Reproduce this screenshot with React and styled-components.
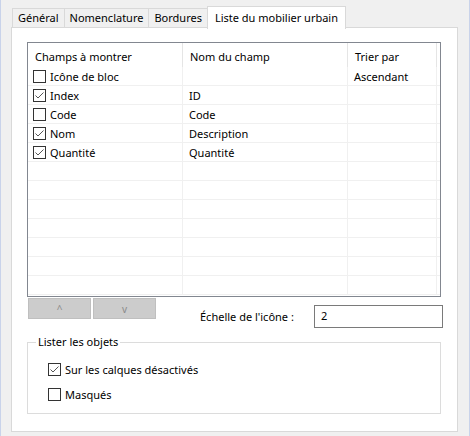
import React from "react";
import styled, { createGlobalStyle } from "styled-components";

const GlobalStyle = createGlobalStyle`
  html, body {
    margin: 0;
    padding: 0;
    background: #f0f0f0;
  }
  * { box-sizing: border-box; }
`;

const tabs = ["Général", "Nomenclature", "Bordures", "Liste du mobilier urbain"];

const rows = [
  { label: "Icône de bloc", checked: false, field: "", sort: "Ascendant" },
  { label: "Index", checked: true, field: "ID", sort: "" },
  { label: "Code", checked: false, field: "Code", sort: "" },
  { label: "Nom", checked: true, field: "Description", sort: "" },
  { label: "Quantité", checked: true, field: "Quantité", sort: "" },
];

const EMPTY_ROWS = 7;

const CheckBox = ({ checked, children }) => (
  <CheckLabel>
    <Box>
      {checked && (
        <svg width="11" height="11" viewBox="0 0 11 11">
          <polyline points="1.5,5.5 4,8 9.5,2.5" fill="none" stroke="#555" strokeWidth="1" />
        </svg>
      )}
    </Box>
    {children}
  </CheckLabel>
);

const App = () => {
  return (
    <Window>
      <GlobalStyle />
      <TabBar>
        {tabs.map((t, i) => (
          <Tab key={t} active={i === tabs.length - 1}>
            {t}
          </Tab>
        ))}
      </TabBar>
      <Panel>
        <ListBox>
          <HeaderRow>
            <HeadCell>Champs à montrer</HeadCell>
            <HeadCell>Nom du champ</HeadCell>
            <HeadCell>Trier par</HeadCell>
            <HeadCell />
          </HeaderRow>
          {rows.map((r) => (
            <Row key={r.label}>
              <Cell>
                <CheckBox checked={r.checked}>{r.label}</CheckBox>
              </Cell>
              <Cell>{r.field}</Cell>
              <Cell>{r.sort}</Cell>
              <Cell />
            </Row>
          ))}
          {Array.from({ length: EMPTY_ROWS }).map((_, i) => (
            <Row key={"e" + i}>
              <Cell />
              <Cell />
              <Cell />
              <Cell />
            </Row>
          ))}
        </ListBox>

        <ControlsRow>
          <MoveButton>^</MoveButton>
          <MoveButton>v</MoveButton>
          <ScaleLabel>Échelle de l'icône :</ScaleLabel>
          <ScaleInput>2</ScaleInput>
        </ControlsRow>

        <Group>
          <Legend>Lister les objets</Legend>
          <GroupBody>
            <CheckBox checked>Sur les calques désactivés</CheckBox>
            <CheckBox checked={false}>Masqués</CheckBox>
          </GroupBody>
        </Group>
      </Panel>
    </Window>
  );
};

const Window = styled.div`
  width: 470px;
  height: 436px;
  background: #f0f0f0;
  border-left: 1px solid #c9d3ea;
  border-right: 1px solid #c9d3ea;
  font-family: "Noto Sans", "Open Sans", sans-serif;
  font-size: 11px;
  color: #000;
  padding-top: 5px;
  overflow: hidden;
`;

const TabBar = styled.div`
  display: flex;
  align-items: flex-end;
  padding-left: 11px;
  height: 23px;
  position: relative;
  z-index: 1;
`;

const Tab = styled.div`
  height: ${({ active }) => (active ? "23px" : "20px")};
  padding: ${({ active }) => (active ? "3px 7px 0 7px" : "1px 5px 0 5px")};
  margin: ${({ active }) => (active ? "0 0 -1px -1px" : "0 0 0 -1px")};
  background: ${({ active }) => (active ? "#fff" : "#f0f0f0")};
  border: 1px solid #d9d9d9;
  border-bottom: ${({ active }) => (active ? "none" : "1px solid #d9d9d9")};
  white-space: nowrap;
  line-height: 16px;
  &:first-child {
    margin-left: 0;
  }
`;

const Panel = styled.div`
  margin-left: 10px;
  width: 447px;
  height: 405px;
  margin-top: -1px;
  background: #fff;
  border: 1px solid #d9d9d9;
  padding: 14px 0 0 15px;
`;

const ListBox = styled.div`
  width: 414px;
  height: 255px;
  border: 1px solid #828790;
  overflow: hidden;
`;

const gridCols = "155px 165px 89px 3px";

const HeaderRow = styled.div`
  display: grid;
  grid-template-columns: ${gridCols};
  height: 24px;
`;

const HeadCell = styled.div`
  padding: 6px 0 0 7px;
  border-right: 1px solid #e5e5e5;
  white-space: nowrap;
  line-height: 16px;
  &:last-child {
    border-right: none;
  }
`;

const Row = styled.div`
  display: grid;
  grid-template-columns: ${gridCols};
  height: 19px;
`;

const Cell = styled.div`
  border-right: 1px solid #f0f0f0;
  border-bottom: 1px solid #f0f0f0;
  padding: 2px 0 0 6px;
  display: flex;
  align-items: center;
  white-space: nowrap;
  line-height: 16px;
  &:first-child {
    padding-left: 5px;
  }
  &:last-child {
    border-right: none;
  }
`;

const CheckLabel = styled.label`
  display: flex;
  align-items: center;
  gap: 4px;
  white-space: nowrap;
  line-height: 16px;
`;

const Box = styled.span`
  width: 13px;
  height: 13px;
  margin-top: -1px;
  border: 1px solid #333;
  background: #fff;
  display: flex;
  align-items: center;
  justify-content: center;
  flex-shrink: 0;
`;

const ControlsRow = styled.div`
  display: flex;
  align-items: flex-start;
  margin-top: 1px;
  padding-left: 1px;
`;

const MoveButton = styled.div`
  width: 63px;
  height: 21px;
  margin-right: 2px;
  background: #cccccc;
  border: 1px solid #bfbfbf;
  color: #8a8a8a;
  font-size: 10px;
  display: flex;
  align-items: center;
  justify-content: center;
`;

const ScaleLabel = styled.div`
  margin: 11px 0 0 42px;
  line-height: 16px;
  white-space: nowrap;
`;

const ScaleInput = styled.div`
  margin: 7px 0 0 auto;
  margin-right: 14px;
  width: 129px;
  height: 23px;
  border: 1px solid #7a7a7a;
  padding: 2px 0 0 6px;
  line-height: 16px;
`;

const Group = styled.fieldset`
  margin: 6px 0 0 0;
  width: 414px;
  height: 80px;
  border: 1px solid #dcdcdc;
  padding: 0 0 0 20px;
`;

const Legend = styled.legend`
  padding: 0 2px;
  margin-left: -12px;
  line-height: 16px;
`;

const GroupBody = styled.div`
  display: flex;
  flex-direction: column;
  gap: 9px;
  padding-top: 12px;
`;

export default App;
